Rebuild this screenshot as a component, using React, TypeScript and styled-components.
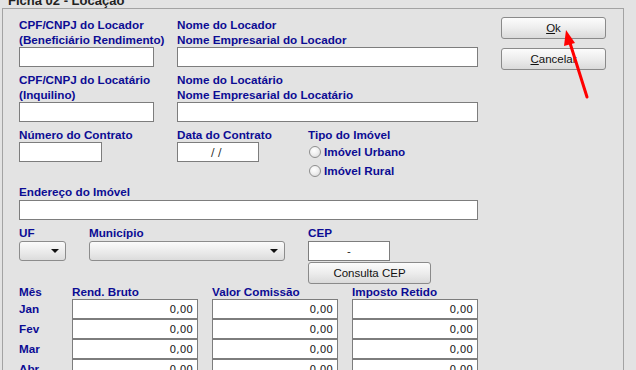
import React from 'react'
import styled, { createGlobalStyle } from 'styled-components'

const MESES = ['Jan', 'Fev', 'Mar', 'Abr', 'Mai', 'Jun']

/**
 * Ficha 02 - Locação (tela de cadastro)
 */
export default function App(): JSX.Element {
  return (
    <ScreenSCP>
      <GlobalStyleSCP />
      <TitleSCP>Ficha 02 - Locação</TitleSCP>
      <PanelSCP>
        <FormSCP>
          <RowSCP>
            <FieldSCP width={158}>
              <LabelSCP>CPF/CNPJ do Locador</LabelSCP>
              <LabelSCP>(Beneficiário Rendimento)</LabelSCP>
              <InputSCP readOnly width={135} />
            </FieldSCP>
            <FieldSCP>
              <LabelSCP>Nome do Locador</LabelSCP>
              <LabelSCP>Nome Empresarial do Locador</LabelSCP>
              <InputSCP readOnly width={301} />
            </FieldSCP>
          </RowSCP>

          <RowSCP gap={5}>
            <FieldSCP width={158}>
              <LabelSCP>CPF/CNPJ do Locatário</LabelSCP>
              <LabelSCP>(Inquilino)</LabelSCP>
              <InputSCP readOnly width={135} />
            </FieldSCP>
            <FieldSCP>
              <LabelSCP>Nome do Locatário</LabelSCP>
              <LabelSCP>Nome Empresarial do Locatário</LabelSCP>
              <InputSCP readOnly width={301} />
            </FieldSCP>
          </RowSCP>

          <RowSCP gap={5}>
            <FieldSCP width={158}>
              <LabelSCP>Número do Contrato</LabelSCP>
              <InputSCP readOnly width={83} />
            </FieldSCP>
            <FieldSCP width={131}>
              <LabelSCP>Data do Contrato</LabelSCP>
              <InputSCP readOnly width={82} $align={'center'} value={'/ / '} />
            </FieldSCP>
            <FieldSCP>
              <LabelSCP>Tipo do Imóvel</LabelSCP>
              <RadioRowSCP>
                <RadioSCP />
                Imóvel Urbano
              </RadioRowSCP>
              <RadioRowSCP>
                <RadioSCP />
                Imóvel Rural
              </RadioRowSCP>
            </FieldSCP>
          </RowSCP>

          <RowSCP gap={4}>
            <FieldSCP>
              <LabelSCP>Endereço do Imóvel</LabelSCP>
              <InputSCP readOnly width={459} $offset={1} />
            </FieldSCP>
          </RowSCP>

          <RowSCP gap={5}>
            <FieldSCP width={70}>
              <LabelSCP>UF</LabelSCP>
              <SelectSCP $width={47}>
                <CaretSCP />
              </SelectSCP>
            </FieldSCP>
            <FieldSCP width={219}>
              <LabelSCP>Município</LabelSCP>
              <SelectSCP $width={196}>
                <CaretSCP />
              </SelectSCP>
            </FieldSCP>
            <FieldSCP>
              <LabelSCP>CEP</LabelSCP>
              <InputSCP readOnly width={82} $align={'center'} value={'-'} $offset={1} />
              <ButtonSCP $width={123} $offset={1}>
                Consulta CEP
              </ButtonSCP>
            </FieldSCP>
          </RowSCP>

          <TableSCP>
            <LabelSCP>Mês</LabelSCP>
            <LabelSCP>Rend. Bruto</LabelSCP>
            <LabelSCP>Valor Comissão</LabelSCP>
            <LabelSCP>Imposto Retido</LabelSCP>
            {MESES.map(mes => (
              <React.Fragment key={mes}>
                <MonthSCP>{mes}</MonthSCP>
                <InputSCP readOnly $align={'right'} value={'0,00'} />
                <InputSCP readOnly $align={'right'} value={'0,00'} />
                <InputSCP readOnly $align={'right'} value={'0,00'} />
              </React.Fragment>
            ))}
          </TableSCP>
        </FormSCP>

        <ActionsSCP>
          <ButtonSCP $width={105}>
            <u>O</u>k
          </ButtonSCP>
          <ButtonSCP $width={105}>
            <u>C</u>ancelar
          </ButtonSCP>
        </ActionsSCP>
      </PanelSCP>

      {/* seta vermelha apontando para o botão Ok */}
      <ArrowSCP width={636} height={370} viewBox={'0 0 636 370'}>
        <line x1={587} y1={97} x2={570} y2={43} stroke={'#ff0000'} strokeWidth={3} strokeLinecap={'round'} />
        <polygon points={'566,30 575,43 564,46'} fill={'#ff0000'} />
      </ArrowSCP>
    </ScreenSCP>
  )
}

const GlobalStyleSCP = createGlobalStyle`
  html, body {
    margin: 0;
    padding: 0;
    background: #e3e3e3;
  }
`
const ScreenSCP = styled.div`
  position: relative;
  width: 636px;
  height: 370px;
  overflow: hidden;
  background: #e3e3e3;
  font-family: 'Liberation Sans', Arial, sans-serif;
`
const TitleSCP = styled.div`
  margin-top: -6px;
  padding-left: 8px;
  height: 13px;
  line-height: 13px;
  font-size: 13px;
  font-weight: bold;
  color: #222;
  white-space: nowrap;
`
const PanelSCP = styled.div`
  margin: 1px 0 0 2px;
  width: 622px;
  height: 400px;
  border: 1px solid #a3a3a3;
  padding: 8px 0 0 16px;
  box-sizing: border-box;
  display: flex;
`
const FormSCP = styled.div`
  width: 459px;
  display: flex;
  flex-direction: column;
`
const RowSCP = styled.div<{ gap?: number }>`
  display: flex;
  align-items: flex-start;
  margin-top: ${props => props.gap ?? 0}px;
`
const FieldSCP = styled.div<{ width?: number }>`
  display: flex;
  flex-direction: column;
  align-items: flex-start;
  width: ${props => (props.width ? `${props.width}px` : 'auto')};
  flex-shrink: 0;
`
const LabelSCP = styled.div`
  height: 15px;
  line-height: 15px;
  font-size: 11.7px;
  font-weight: bold;
  color: #0c0c94;
  white-space: nowrap;
`
const InputSCP = styled.input<{ width?: number; $align?: string; $offset?: number }>`
  width: ${props => (props.width ? `${props.width}px` : '100%')};
  height: 20px;
  box-sizing: border-box;
  margin: ${props => props.$offset ?? 0}px 0 0 0;
  padding: 0 4px;
  border: 1px solid #7d7d7d;
  border-radius: 0;
  background: #fff;
  outline: none;
  font-family: 'DejaVu Sans', Verdana, sans-serif;
  font-size: 10.5px;
  color: #222;
  text-align: ${props => props.$align ?? 'left'};
`
const RadioRowSCP = styled.div`
  display: flex;
  align-items: center;
  gap: 3px;
  height: 19px;
  padding-left: 1px;
  font-size: 11.7px;
  font-weight: bold;
  color: #0c0c94;
  white-space: nowrap;
`
const RadioSCP = styled.span`
  width: 12px;
  height: 12px;
  box-sizing: border-box;
  border-radius: 50%;
  border: 1px solid #8e8e8e;
  background: radial-gradient(circle at 40% 35%, #ffffff 0%, #f0f0f0 45%, #d4d4d4 100%);
`
const SelectSCP = styled.div<{ $width: number }>`
  width: ${props => props.$width}px;
  height: 20px;
  margin-top: 1px;
  box-sizing: border-box;
  border: 1px solid #8c8c8c;
  border-radius: 3px;
  background: linear-gradient(#fbfbfb, #e9e9e9 60%, #dcdcdc);
  display: flex;
  align-items: center;
  justify-content: flex-end;
  padding-right: 6px;
`
const CaretSCP = styled.span`
  width: 0;
  height: 0;
  border-left: 4px solid transparent;
  border-right: 4px solid transparent;
  border-top: 4px solid #111;
`
const ButtonSCP = styled.div<{ $width: number; $offset?: number }>`
  width: ${props => props.$width}px;
  height: 22px;
  margin-top: ${props => props.$offset ?? 0}px;
  box-sizing: border-box;
  border: 1px solid #8a8a8a;
  border-radius: 3px;
  background: linear-gradient(#fcfcfc, #ededed 50%, #dadada);
  display: flex;
  align-items: center;
  justify-content: center;
  font-size: 11.5px;
  color: #111;
  white-space: nowrap;
`
const ActionsSCP = styled.div`
  margin-left: 23px;
  display: flex;
  flex-direction: column;
  gap: 9px;
`
const TableSCP = styled.div`
  display: grid;
  grid-template-columns: 39px 126px 126px 126px;
  column-gap: 14px;
`
const MonthSCP = styled.div`
  height: 20px;
  line-height: 20px;
  font-size: 11.7px;
  font-weight: bold;
  color: #0c0c94;
`
const ArrowSCP = styled.svg`
  position: absolute;
  left: 0;
  top: 0;
  pointer-events: none;
`
